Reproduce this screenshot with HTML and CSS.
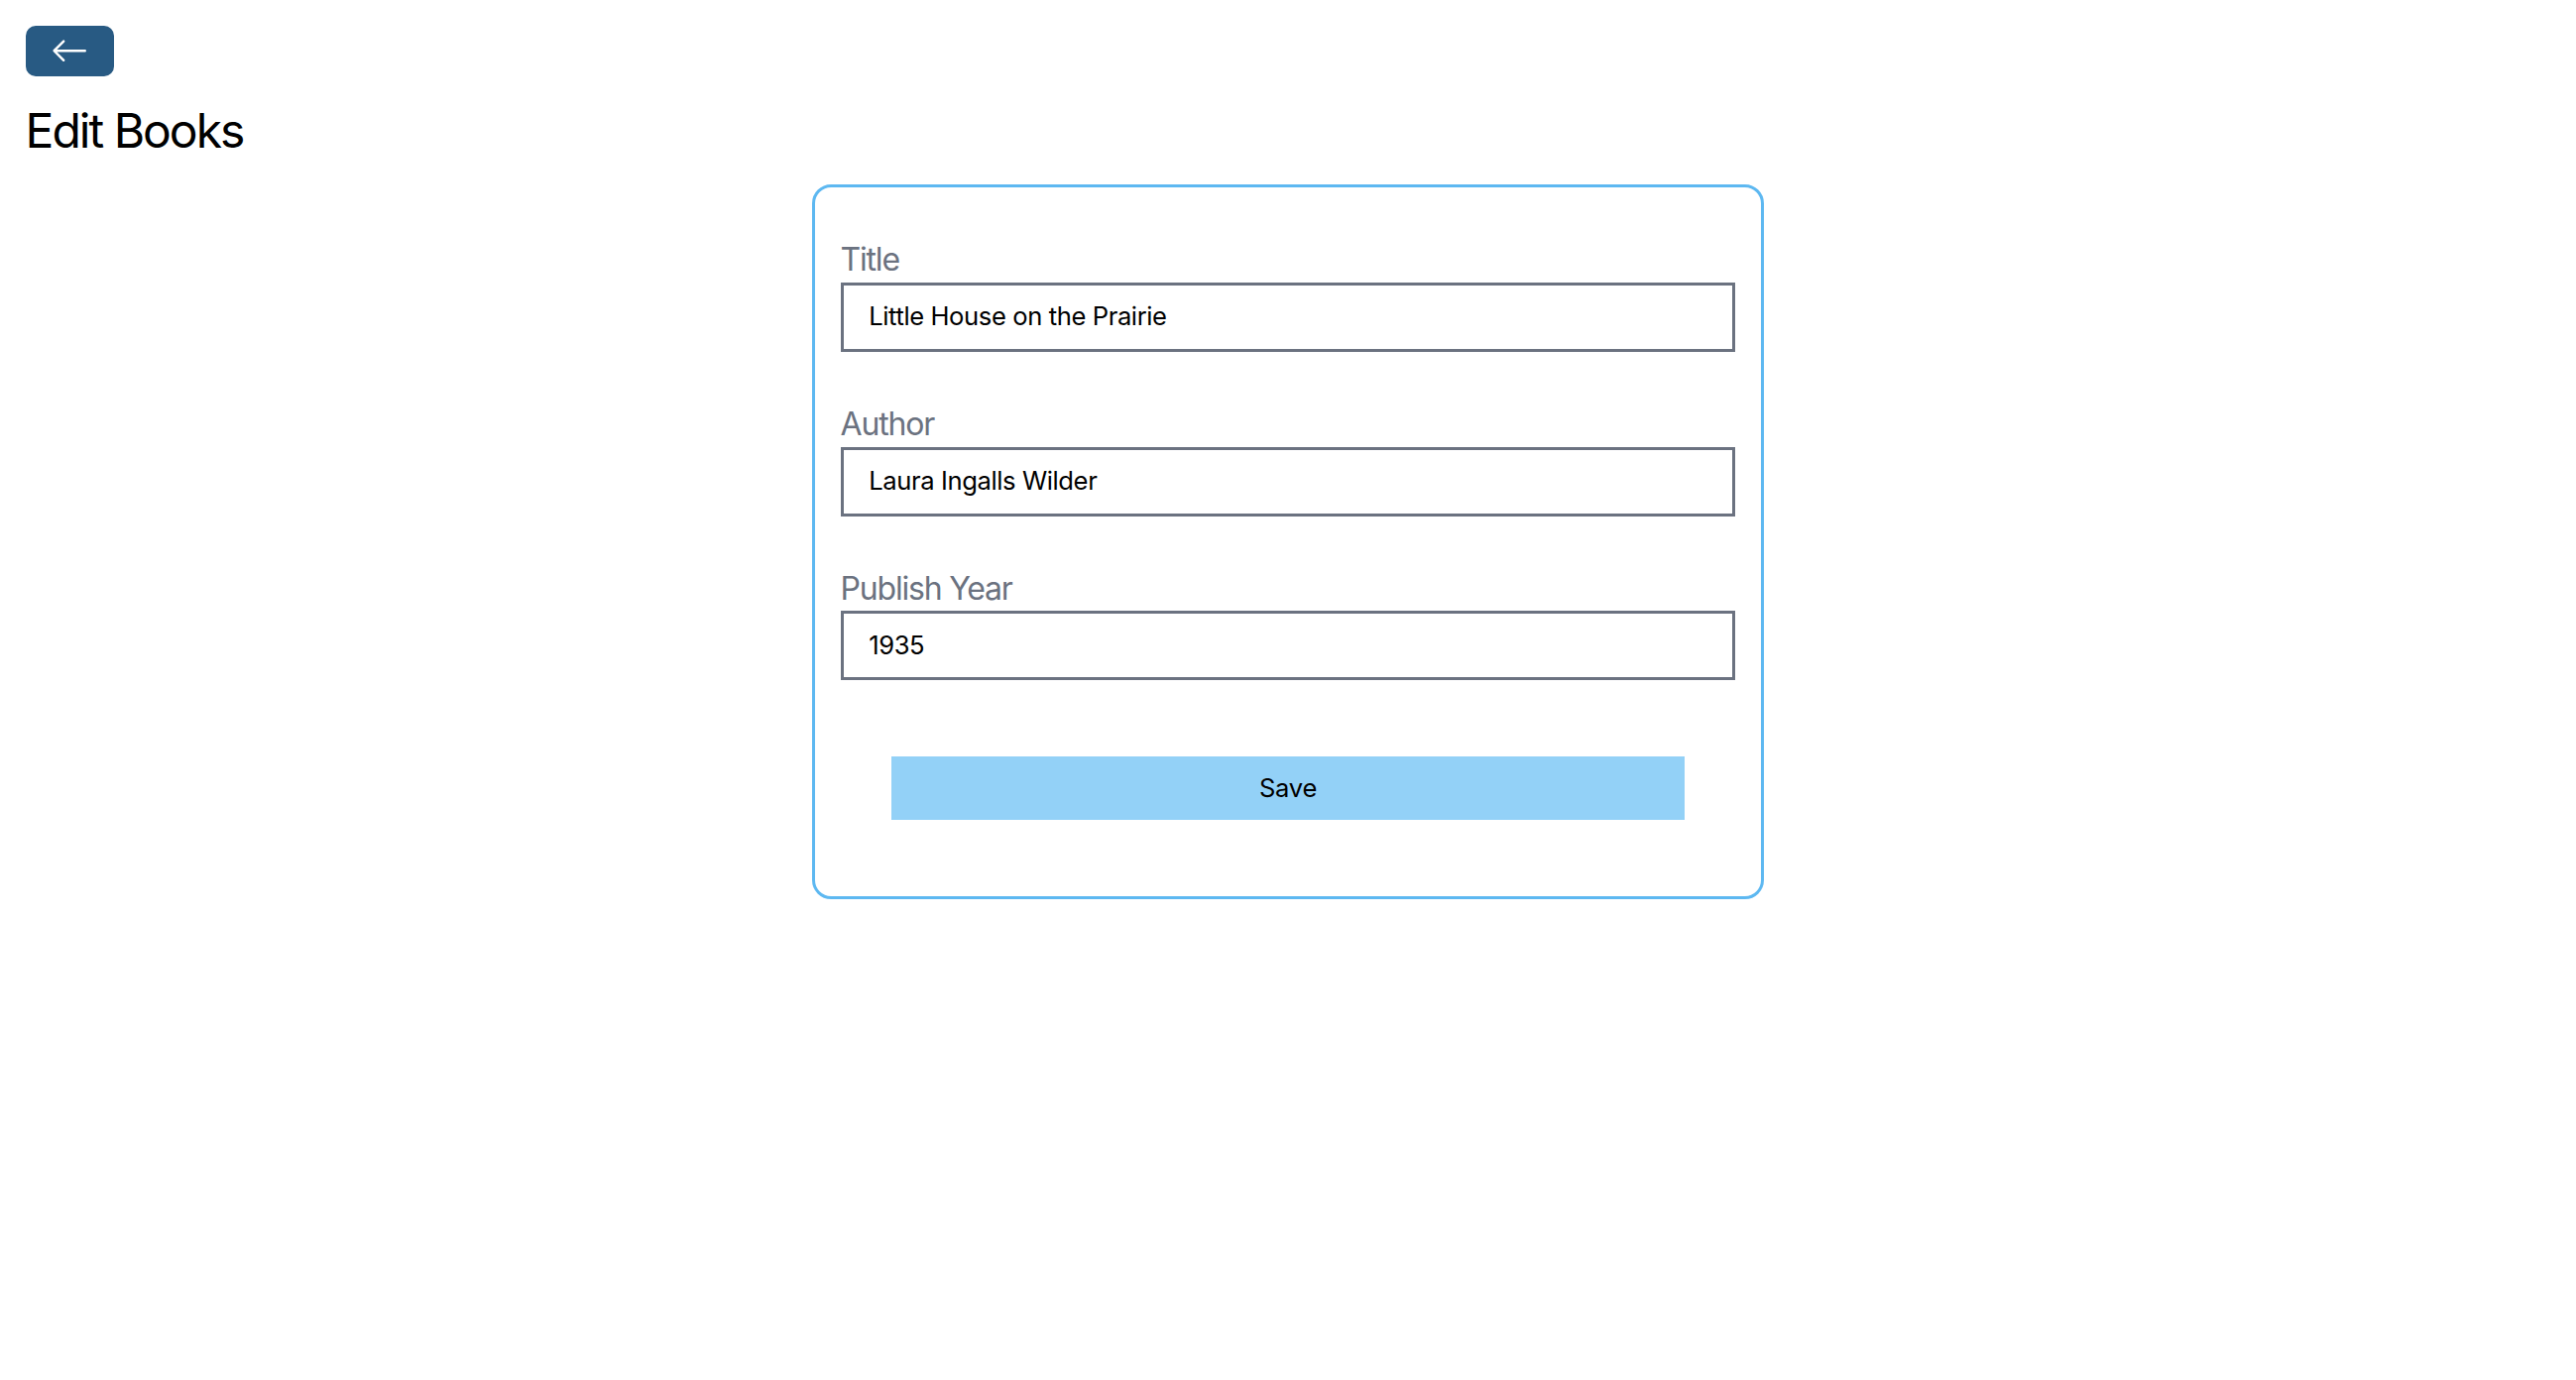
FILE: index.html
```html
<!DOCTYPE html>
<html lang="en">
<head>
<meta charset="utf-8">
<title>Edit Books</title>
<link rel="stylesheet" href="styles.css">
</head>
<body>
<div class="page">
  <div class="back-row">
    <a class="back-btn" href="#" aria-label="Back">
      <svg class="back-icon" viewBox="0 0 16 16" fill="currentColor" aria-hidden="true">
        <path fill-rule="evenodd" d="M15 8a.5.5 0 0 0-.5-.5H2.707l3.147-3.146a.5.5 0 1 0-.708-.708l-4 4a.5.5 0 0 0 0 .708l4 4a.5.5 0 0 0 .708-.708L2.707 8.5H14.5A.5.5 0 0 0 15 8z"/>
      </svg>
    </a>
  </div>
  <h1 class="heading">Edit Books</h1>
  <div class="card">
    <div class="field">
      <label class="label">Title</label>
      <input class="input" type="text" value="Little House on the Prairie">
    </div>
    <div class="field">
      <label class="label">Author</label>
      <input class="input" type="text" value="Laura Ingalls Wilder">
    </div>
    <div class="field">
      <label class="label">Publish Year</label>
      <input class="input" type="number" value="1935">
    </div>
    <button class="save-btn" type="button">Save</button>
  </div>
</div>
</body>
</html>
```

FILE: styles.css
```css
* { box-sizing: border-box; }
html, body { margin: 0; padding: 0; background: #fff; }
body {
  font-family: Inter, "Noto Sans", "Liberation Sans", sans-serif;
  color: #000;
}
.page { padding: 25.6px; }
.back-row { display: flex; }
.back-btn {
  display: flex;
  align-items: center;
  justify-content: center;
  width: 89.6px;
  height: 51.2px;
  background: #285a83;
  color: #fff;
  border-radius: 10px;
}
.back-icon { width: 38.4px; height: 38.4px; display: block; }
.heading {
  margin: 26.6px 0 24.6px;
  font-size: 48px;
  line-height: 57.6px;
  font-weight: 400;
  letter-spacing: -2px;
}
.card {
  display: flex;
  flex-direction: column;
  width: 960px;
  margin: 0 auto;
  padding: 25.6px;
  border: 3.2px solid #5db8f1;
  border-radius: 19.2px;
}
.field { margin: 25.6px 0; display: flex; flex-direction: column; }
.label {
  font-size: 32px;
  line-height: 44.8px;
  color: #6b7280;
  margin-right: 25.6px;
  letter-spacing: -1.2px;
}
.input {
  width: 100%;
  border: 3.2px solid #6b7280;
  padding: 12.8px 25.6px;
  font-family: inherit;
  font-size: 25.6px;
  line-height: 38.4px;
  letter-spacing: -0.4px;
  color: #000;
  margin: 0;
  outline: none;
  -moz-appearance: textfield;
  appearance: textfield;
}
.input::-webkit-outer-spin-button,
.input::-webkit-inner-spin-button { -webkit-appearance: none; margin: 0; }
.save-btn {
  margin: 51.2px;
  padding: 12.8px;
  background: #93d1f7;
  border: none;
  font-family: inherit;
  font-size: 25.6px;
  line-height: 38.4px;
  letter-spacing: -0.3px;
  color: #000;
}
```
